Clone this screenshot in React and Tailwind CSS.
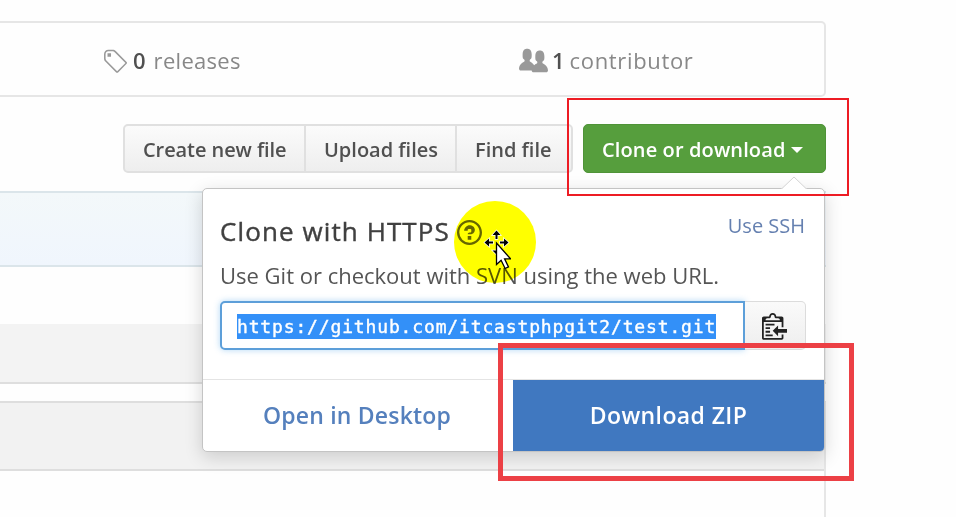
const sans = "font-['Open_Sans','Noto_Sans',sans-serif]";

function TagIcon() {
  return (
    <svg viewBox="0 0 14 16" className="mt-[3px] h-[28px] w-[25px] shrink-0" fill="#999">
      <path d="M7.73 1.73C7.26 1.26 6.62 1 5.96 1H3.5C2.13 1 1 2.13 1 3.5v2.47c0 .66.27 1.3.73 1.77l6.06 6.06c.39.39 1.02.39 1.41 0l4.59-4.59a.996.996 0 0 0 0-1.41L7.73 1.73zM2.38 7.09c-.31-.3-.47-.7-.47-1.13V3.5c0-.88.72-1.59 1.59-1.59h2.47c.42 0 .83.16 1.13.47l6.14 6.13-4.73 4.73-6.13-6.15zM3.01 3h2v2H3V3h.01z" />
    </svg>
  );
}

function PeopleIcon() {
  return (
    <svg viewBox="0 0 16 16" className="mt-[3px] h-[29px] w-[29px] shrink-0" fill="#999">
      <path d="M16 12.999c0 .439-.45 1-1 1H7.995c-.539 0-.994-.447-.995-.999H1c-.54 0-1-.561-1-1 0-2.634 3-4 3-4s.229-.409 0-1c-.841-.621-1.058-.59-1-3 .058-2.419 1.367-3 2.5-3s2.442.58 2.5 3c.058 2.41-.159 2.379-1 3-.229.59 0 1 0 1s1.549.711 2.42 2.088C9.196 9.369 10 8.999 10 8.999s.229-.409 0-1c-.841-.62-1.058-.59-1-3 .058-2.419 1.367-3 2.5-3s2.437.581 2.495 3c.059 2.41-.158 2.38-1 3-.229.59 0 1 0 1s3.005 1.366 3.005 4" />
    </svg>
  );
}

function HelpIcon() {
  return (
    <svg viewBox="0 0 14 16" className="ml-[7px] mt-[3px] h-[29px] w-[25px] shrink-0" fill="#666">
      <path d="M6 10h2v2H6v-2zm4-3.5C10 8.64 8 9 8 9H6c0-.55.45-1 1-1h.5c.28 0 .5-.22.5-.5v-1c0-.28-.22-.5-.5-.5h-1c-.28 0-.5.22-.5.5V7H4c0-1.5 1.5-3 3-3s3 1 3 2.5zM7 2.3c3.14 0 5.7 2.56 5.7 5.7s-2.56 5.7-5.7 5.7A5.71 5.71 0 0 1 1.3 8c0-3.14 2.56-5.7 5.7-5.7zM7 1C3.14 1 0 4.14 0 8s3.14 7 7 7 7-3.14 7-7-3.14-7-7-7z" />
    </svg>
  );
}

function ClippyIcon() {
  return (
    <svg viewBox="0 0 14 16" className="h-[29px] w-[25px] shrink-0" fill="#222">
      <path d="M2 13h4v1H2v-1zm5-6H2v1h5V7zm2 3V8l-3 3 3 3v-2h5v-2H9zM4.5 9H2v1h2.5V9zM2 12h2.5v-1H2v1zm9 1h1v2c-.02.28-.11.52-.3.7-.19.18-.42.28-.7.3H1c-.55 0-1-.45-1-1V4c0-.55.45-1 1-1h3c0-1.11.89-2 2-2 1.11 0 2 .89 2 2h3c.55 0 1 .45 1 1v5h-1V6H1v9h10v-2zM2 5h8c0-.55-.45-1-1-1H8c-.55 0-1-.45-1-1s-.45-1-1-1-1 .45-1 1-.45 1-1 1H3c-.55 0-1 .45-1 1z" />
    </svg>
  );
}

function MoveCursor() {
  return (
    <svg viewBox="0 0 28 42" className="absolute left-[483px] top-[229px] h-[42px] w-[28px]">
      <g fill="#000" stroke="#fff" strokeWidth="1.4" paintOrder="stroke">
        <path d="M13.5 1.5l4 4.5h-3v4h-2V6h-3z" />
        <path d="M1.500 13.500l4.500-4v3h4v2h-4v3z" />
        <path d="M25.500 13.500l-4.500-4v3h-4v2h4v3z" />
        <path d="M9.500 21.500h4v4z" />
      </g>
      <path
        d="M13.500 14v21.500l4.600-4.200 4 8.200 3.400-1.600-3.900-8h6z"
        fill="#fff"
        stroke="#000"
        strokeWidth="1.300"
      />
    </svg>
  );
}

function SummaryBar() {
  return (
    <div className="mt-[21px] flex h-[76px] w-[826px] items-center rounded-r-[5px] border-2 border-l-0 border-[#e6e6e6] pt-[2px] text-[22px] leading-[30px] text-[#888]">
      <div className="flex w-[418px] items-center pl-[102px]">
        <TagIcon />
        <span className="ml-[6px] font-semibold text-[#505050]">0</span>
        <span className="ml-[8px] tracking-[0.300px]">releases</span>
      </div>
      <div className="flex items-center pl-[101px]">
        <PeopleIcon />
        <span className="ml-[4px] font-semibold text-[#505050]">1</span>
        <span className="ml-[5px] tracking-[0.650px]">contributor</span>
      </div>
    </div>
  );
}

function Toolbar() {
  return (
    <div className="mt-[27px] flex h-[49px] w-[826px] justify-between pl-[123px] text-[20px] font-semibold leading-[30px]">
      <div className="flex rounded-[5px] border-2 border-[#e0e0e0] bg-linear-to-b from-[#fbfbfb] to-[#eeeeee] text-[#505050]">
        <div className="flex w-[181px] items-center border-r-2 border-[#e0e0e0] pl-[18px] pt-[3px]">
          <span className="whitespace-nowrap tracking-[-0.080px]">Create new file</span>
        </div>
        <div className="flex w-[151px] items-center border-r-2 border-[#e0e0e0] pl-[18px] pt-[3px]">
          <span className="whitespace-nowrap">Upload files</span>
        </div>
        <div className="flex w-[114px] items-center pl-[18px] pt-[3px]">
          <span className="whitespace-nowrap">Find file</span>
        </div>
      </div>
      <div className="flex w-[243px] items-center rounded-[5px] border border-[#4f9338] bg-[#569e3d] pl-[18px] pt-[2px] text-white">
        <span className="whitespace-nowrap tracking-[0.120px]">Clone or download</span>
        <span className="ml-[6px] border-x-[6px] border-t-[6px] border-x-transparent border-t-white" />
      </div>
    </div>
  );
}

function FileList() {
  return (
    <>
      <div className="mt-[18px] w-[826px]">
        <div className="h-[76px] border-y-2 border-[#dbe5ea] bg-linear-to-b from-[#f3f8fa] to-[#f0f6fd]" />
        <div className="h-[57px]" />
        <div className="h-[60px] border-b-2 border-[#dedede] bg-[#f3f3f3]" />
      </div>
      <div className="mt-[17px] h-[200px] w-[826px] border-t-2 border-r-2 border-t-[#dedede] border-r-[#e6e6e6]">
        <div className="h-[68px] border-b-2 border-[#dedede] bg-[#f2f2f2]" />
      </div>
    </>
  );
}

function ClonePopover() {
  return (
    <div className="absolute left-[202px] top-[188px] flex h-[264px] w-[623px] flex-col rounded-[5px] border border-[#c4c4c4] bg-white shadow-[0_5px_18px_rgba(0,0,0,0.16)]">
      <svg viewBox="0 0 26 14" className="absolute -top-[13px] left-[578px] h-[14px] w-[26px]">
        <path d="M0 13.500L13 1l13 12.500z" fill="#fff" />
        <path d="M0 12.500h1L13 1l12 11.500h1" fill="none" stroke="#d4d4d4" />
      </svg>
      <div className="flex h-[57px] items-start justify-between pl-[17px] pr-[19px]">
        <h1 className="flex items-center pt-[25px] text-[26px] leading-[34px] text-[#404040]">
          <span className="whitespace-nowrap tracking-[1.100px] [-webkit-text-stroke:0.400px_#404040]">Clone with HTTPS</span>
          <HelpIcon />
        </h1>
        <a className="pt-[22px] text-[20px] leading-[30px] whitespace-nowrap text-[#6580b0]">Use SSH</a>
      </div>
      <p className="mt-[14px] pl-[17px] text-[22px] leading-[30px] whitespace-nowrap text-[#555]">
        Use Git or checkout with SVN using the web URL.
      </p>
      <div className="mt-[11px] ml-[17px] flex h-[49px] w-[586px]">
        <div className="flex w-[525px] items-center rounded-l-[5px] border-2 border-[#5d9fd9] bg-white pl-[15px] pt-px shadow-[0_0_6px_rgba(81,167,232,0.45)]">
          <span className="bg-[#3390f8] font-['DejaVu_Sans_Mono',monospace] text-[18px] leading-[25px] tracking-[0.850px] whitespace-nowrap text-white [-webkit-text-stroke:0.400px_#ffffff]">
            https://github.com/itcastphpgit2/test.git
          </span>
        </div>
        <div className="flex flex-1 items-center rounded-r-[5px] border border-l-0 border-[#dcdcdc] bg-linear-to-b from-[#fafafa] to-[#eeeeee] pl-[17px]">
          <ClippyIcon />
        </div>
      </div>
      <div className="mt-auto flex h-[72px] border-t border-[#e4e4e4] font-semibold">
        <a className="flex w-[310px] items-center justify-center pr-[2px] text-[23px] tracking-[0.200px] whitespace-nowrap text-[#5580bd]">
          Open in Desktop
        </a>
        <a className="flex flex-1 items-center justify-center rounded-br-[4px] bg-[#4078c0] text-[23px] tracking-[0.400px] whitespace-nowrap text-white">
          Download ZIP
        </a>
      </div>
    </div>
  );
}

export default function App() {
  return (
    <div className={`relative flow-root h-[517px] w-[956px] overflow-hidden bg-[#fefefe] ${sans}`}>
      <SummaryBar />
      <Toolbar />
      <FileList />
      <ClonePopover />
      <div className="absolute left-[454px] top-[201px] h-[82px] w-[82px] rounded-full bg-[#ffff00] mix-blend-multiply" />
      <MoveCursor />
      <div className="absolute left-[567px] top-[98px] h-[98px] w-[282px] border-2 border-[#ed1c24]" />
      <div className="absolute left-[498px] top-[343px] h-[138px] w-[356px] border-[5px] border-[#ec4045]" />
    </div>
  );
}
